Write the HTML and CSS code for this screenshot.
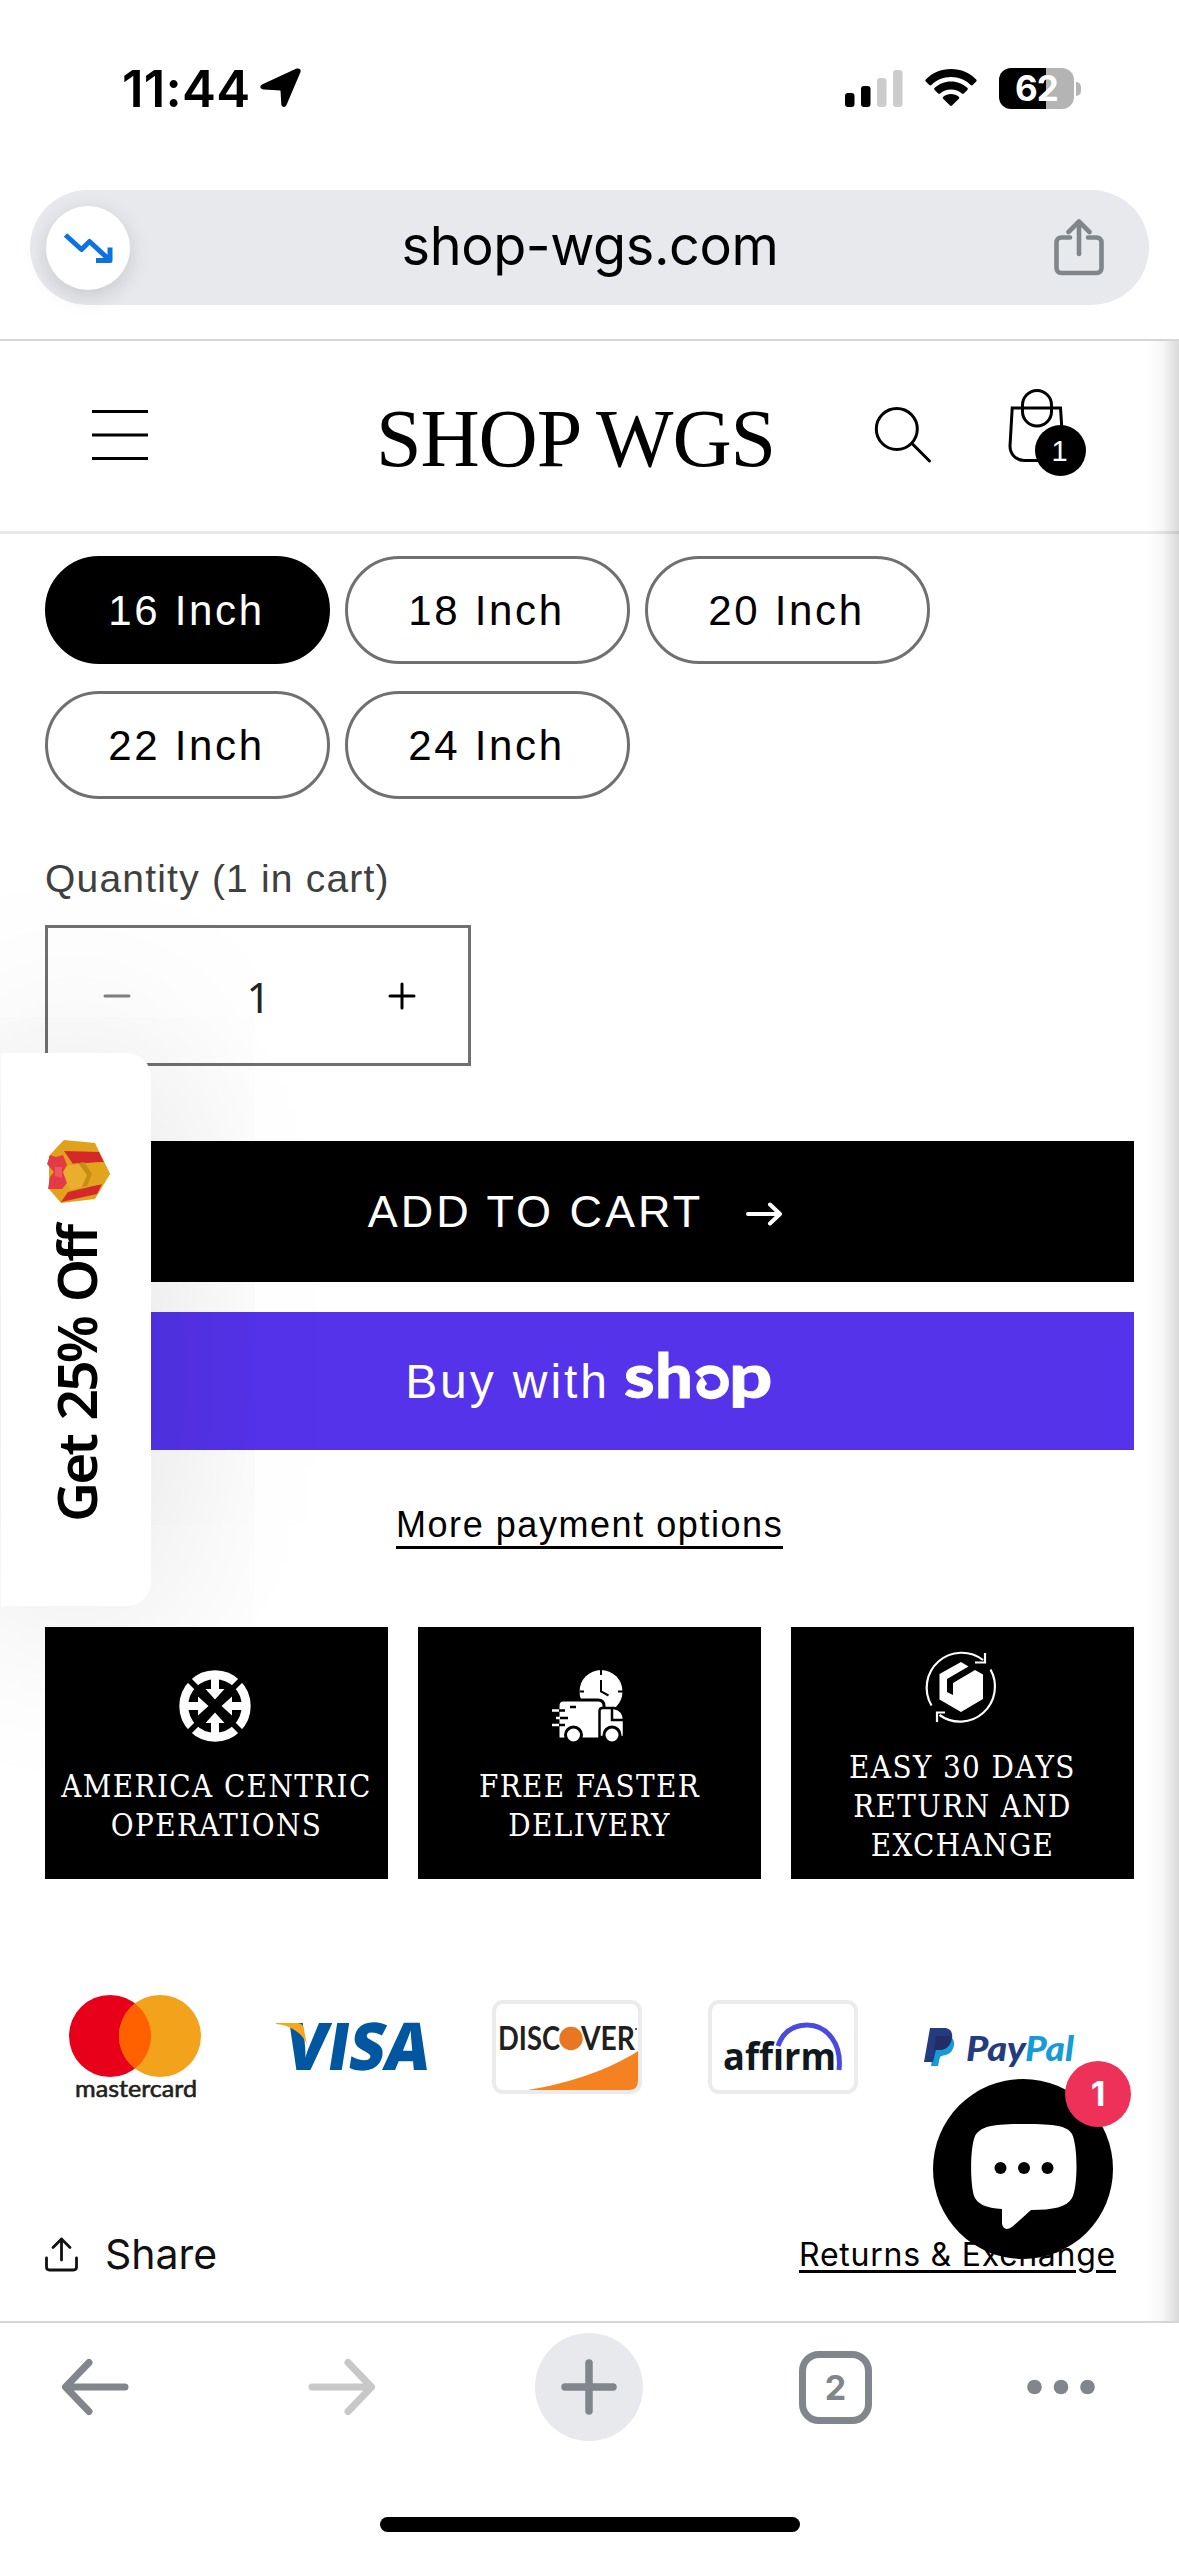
FILE: index.html
```html
<!DOCTYPE html>
<html lang="en">
<head>
<meta charset="utf-8">
<title>Shop WGS</title>
<link rel="stylesheet" href="styles.css">
</head>
<body>
<header class="browser-top">
  <div class="status">
    <div class="status-left">
      <span class="time">11:44</span>
      <svg width="41" height="40" viewBox="0 0 41 40"><path d="M40.500 4 26.500 37c-1.200 2.800-5 2.600-5.200-.8L20.500 22.500 4 21.500c-4-.2-5-3.600-1.500-5.200L36 .8c3-1.300 5.500.6 4.500 3.200Z"/></svg>
    </div>
    <div class="status-right">
      <svg width="58" height="37" viewBox="0 0 58 37"><rect y="23" width="9.500" height="14" rx="3"/><rect x="16" y="16" width="9.500" height="21" rx="3"/><g fill="#ccc"><rect x="32" y="8" width="9.500" height="29" rx="3"/><rect x="48" width="9.500" height="37" rx="3"/></g></svg>
      <svg width="52" height="38" viewBox="0 0 52 38"><path d="M26 0C16 0 7 4 .8 10.500c-.6.600-.6 1.400 0 2l3.500 3.500c.6.600 1.400.6 2 0C11.500 10.900 18.400 8 26 8s14.500 2.900 19.700 8c.6.600 1.400.6 2 0l3.500-3.500c.6-.6.6-1.400 0-2C45 4 36 0 26 0Z"/><path d="M26 12.500c-6.300 0-12 2.400-16.300 6.300-.7.600-.7 1.500-.1 2.100l3.600 3.600c.5.500 1.300.6 1.900 0 2.900-2.600 6.700-4 10.900-4s8 1.400 10.900 4c.6.600 1.400.5 1.900 0l3.600-3.600c.6-.6.600-1.500-.1-2.100C38 14.900 32.300 12.500 26 12.500Z"/><path d="M26 25c-2.900 0-5.600 1-7.700 2.700-.7.600-.7 1.400-.1 2l6.800 6.800c.6.600 1.400.6 2 0l6.800-6.800c.6-.6.6-1.400-.1-2C31.600 26 28.900 25 26 25Z"/></svg>
      <div class="battery"><span class="battery-level">62</span><i class="battery-tip"></i></div>
    </div>
  </div>
  <div class="address">
    <span class="price-chip"><svg width="50" height="32" viewBox="0 0 50 32" fill="none" stroke="#0b72e0" stroke-width="5" stroke-linejoin="round"><path d="M2.500 3 18.500 17.500 26.500 9.500 46 27.500M47 15.500v13H33"/></svg></span>
    <span class="url">shop-wgs.com</span>
    <svg class="share-page" width="50" height="57" viewBox="0 0 50 57" fill="none" stroke="#80868b" stroke-width="4.600" stroke-linecap="round" stroke-linejoin="round"><path d="M16 18.500H7.500c-3 0-5 2-5 5V49c0 3 2 5 5 5h35c3 0 5-2 5-5V23.500c0-3-2-5-5-5H34M25 35V3M14.500 13 25 2.500 35.500 13"/></svg>
  </div>
</header>

<div class="site">
  <header class="shop-header">
    <svg class="menu" width="58" height="52" viewBox="0 0 58 52" stroke="#000" stroke-width="3"><path d="M1 2.500H57M1 26H57M1 49.500H57"/></svg>
    <h1 class="logo">SHOP WGS</h1>
    <svg class="search" width="58" height="58" viewBox="0 0 58 58" fill="none" stroke="#000" stroke-width="3" stroke-linecap="round"><circle cx="22.800" cy="23" r="20.500"/><path d="M38 37.500 55.500 55"/></svg>
    <div class="bag">
      <svg width="58" height="76" viewBox="0 0 58 76" fill="none" stroke="#000" stroke-width="3"><path d="M4.200 20H52.500l2.500 38c0 9-6 14.500-13 14.500H16C8 72.500 2 66 2 58Z"/><rect x="14.500" y="2.500" width="29" height="35.500" rx="14.500"/></svg>
      <span class="bag-count">1</span>
    </div>
  </header>

  <main class="product">
    <div class="sizes">
      <span class="size selected">16 Inch</span><span class="size">18 Inch</span><span class="size">20 Inch</span><span class="size">22 Inch</span><span class="size">24 Inch</span>
    </div>
    <div class="qty-label">Quantity (1 in cart)</div>
    <div class="qty">
      <svg width="28" height="28" viewBox="0 0 28 28" stroke="#7f7f7f" stroke-width="3" stroke-linecap="round"><path d="M2 14H26"/></svg>
      <span class="qty-value">1</span>
      <svg width="28" height="28" viewBox="0 0 28 28" stroke="#000" stroke-width="3" stroke-linecap="round"><path d="M2 14H26M14 2V26"/></svg>
    </div>
    <button class="add">ADD TO CART<svg width="38" height="26" viewBox="0 0 38 26" fill="none" stroke="#fff" stroke-width="4" stroke-linecap="round" stroke-linejoin="round"><path d="M3 13H35M25 3.500 35 13 25 22.500"/></svg></button>
    <button class="buy">Buy with
      <svg class="shop-mark" width="150" height="62" viewBox="0 0 150 62">
        <g font-family="Lato" font-weight="900" font-size="61" fill="#fff" stroke="#fff" stroke-width=".8"><text x="0" y="48" textLength="34" lengthAdjust="spacingAndGlyphs">s</text><text x="31" y="48" textLength="41" lengthAdjust="spacingAndGlyphs">h</text><text x="105" y="48" textLength="47" lengthAdjust="spacingAndGlyphs">p</text></g>
        <path d="M74 25C80 18.500 89 18 95 22 102 27 102.500 36.500 97 41.500 91 46.500 80.500 46 77.500 40.500 75.500 37 77 33 81 30.500" fill="none" stroke="#fff" stroke-width="8.500"/>
      </svg>
    </button>
    <a class="more">More payment options</a>

    <section class="features">
      <div class="feature">
        <svg width="72" height="72" viewBox="-36 -36 72 72"><circle r="31.200" fill="none" stroke="#fff" stroke-width="9"/><path d="M-26-26-12-12M26 26 12 12M26-26 12-12M-26 26-12 12" stroke="#000" stroke-width="5.500"/><g fill="#fff"><path id="arw" d="M-4-30H4V-17H9.500L0-6.500-9.500-17H-4Z"/><use href="#arw" transform="rotate(90)"/><use href="#arw" transform="rotate(180)"/><use href="#arw" transform="rotate(270)"/></g></svg>
        <p>AMERICA CENTRIC OPERATIONS</p>
      </div>
      <div class="feature">
        <svg width="72" height="72" viewBox="0 0 72 72"><circle cx="49" cy="21.500" r="21.500" fill="#fff"/><path d="M49 0V5M27.500 21.500H32M66 21.500H71M49 10V21.500L56.500 25.500" fill="none" stroke="#000" stroke-width="2"/><path d="M6 36c0-4 2-6 5-6H46c4 0 6 2 6 6V69H6Z" fill="#fff" stroke="#000" stroke-width="3"/><path d="M47.500 67V41q0-3 3-3H62q10 2 10 12V67Z" fill="#fff" stroke="#000" stroke-width="2.500"/><path d="M60 38V50H72" fill="none" stroke="#000" stroke-width="2.500"/><path d="M0 40.500H7M4 48H10M0 55H7" stroke="#fff" stroke-width="2.500"/><path d="M7 40.500H13M8 48H16M7 55H13M18 37H24" stroke="#000" stroke-width="2.500"/><g fill="#fff" stroke="#000" stroke-width="3"><circle cx="21.500" cy="65" r="8"/><circle cx="60" cy="65" r="8"/></g></svg>
        <p>FREE FASTER DELIVERY</p>
      </div>
      <div class="feature">
        <svg width="72" height="72" viewBox="0 0 72 72" fill="none" stroke="#fff" stroke-width="2.200"><path d="M6.500 54.500A35 35 0 0 1 58 9M65.500 18.500A35 35 0 0 1 14.500 64M60 2V11.500H50M12 71V61.500H20"/><path d="M36 11 43.500 15.500 22 28V41L28 44V32L50 19 58 23.500V48L36 61 14.500 48.500V23Z" fill="#fff" stroke="none"/></svg>
        <p>EASY 30 DAYS RETURN AND EXCHANGE</p>
      </div>
    </section>

    <section class="payments">
      <svg width="150" height="110" viewBox="0 0 150 110"><circle cx="50" cy="46" r="41" fill="#e8001b"/><circle cx="100" cy="46" r="41" fill="#f3a21b"/><path d="M75 13.500A41 41 0 0 1 75 78.500 41 41 0 0 1 75 13.500Z" fill="#ff6000"/><text x="15" y="107" font-family="Lato" font-weight="400" stroke="#231f20" stroke-width=".6" font-size="23" fill="#231f20" textLength="122" lengthAdjust="spacingAndGlyphs">mastercard</text></svg>
      <svg width="150" height="110" viewBox="0 0 150 110"><text transform="translate(6 80) skewX(-9)" font-family="Open Sans" font-weight="800" font-size="66" fill="#00579f" textLength="145" lengthAdjust="spacingAndGlyphs">VISA</text><path d="M0 33H20C26 33 27 35 28 40L31 55C27 44 17 36 0 34Z" fill="#faa61a"/></svg>
      <svg width="150" height="110" viewBox="0 0 150 110"><rect x="2" y="12" width="146" height="90" rx="9" fill="#fff" stroke="#ebebeb" stroke-width="4"/><path d="M36 100C80 93 120 78 146 61V91Q146 100 137 100Z" fill="#f58220"/><g font-family="Lato" font-weight="700" font-size="32" fill="#231f20"><text x="6" y="60" textLength="62" lengthAdjust="spacingAndGlyphs">DISC</text><text x="89" y="60" textLength="54" lengthAdjust="spacingAndGlyphs">VER</text></g><circle cx="79" cy="48.500" r="11.700" fill="#e87722"/><circle cx="144" cy="39" r="1" fill="#231f20"/></svg>
      <svg width="150" height="110" viewBox="0 0 150 110"><rect x="2" y="12" width="146" height="90" rx="9" fill="#fff" stroke="#ebebeb" stroke-width="4"/><path d="M70 56C76 39 88 35 99 35 120 35 134 55 131 80" fill="none" stroke="#4a4ae0" stroke-width="5"/><text x="15" y="80" font-family="Open Sans" font-weight="700" font-size="38" fill="#101820" textLength="113" lengthAdjust="spacingAndGlyphs">affırm</text></svg>
      <svg width="150" height="110" viewBox="0 0 150 110"><path d="M11 46H25C32 49 31 57 27 62 23 66 18 65 16 67L14 76H7Z" fill="#179bd7"/><path d="M6 38H20C27 38 29 43 28 49 26 58 20 60 12 60L9 72H0Z" fill="#253b80"/><path d="M12 46H26C28 50 25 60 16 60H10Z" fill="#222d65"/><g font-family="Lato" font-weight="900" font-style="italic" font-size="35"><text x="42" y="71" fill="#253b80" textLength="60" lengthAdjust="spacingAndGlyphs">Pay</text><text x="101" y="71" fill="#179bd7" textLength="49" lengthAdjust="spacingAndGlyphs">Pal</text></g></svg>
    </section>

    <div class="links">
      <a class="share"><svg width="33" height="36" viewBox="0 0 33 36" fill="none" stroke="#111" stroke-width="2.800" stroke-linecap="round" stroke-linejoin="round"><path d="M1.500 22V31c0 2 1 3 3 3h24c2 0 3-1 3-3V22M16.500 24V3M8 11.500 16.500 3 25 11.500"/></svg>Share</a>
      <a class="returns">Returns &amp; Exchange</a>
    </div>
  </main>

  <aside class="offer">
    <span class="offer-text">Get 25% Off</span>
    <svg class="gift" width="64" height="64" viewBox="0 0 64 64"><path d="M12 6 18 0 49 3 64 34 49 59 15 63 3 49V16Z" fill="#dfa21a"/><path d="M18 11 53 12 58 22 27 24ZM22 52 56 44 51 54 15 62Z" fill="#d5282b"/><path d="M24 24 58 22 64 34 57 44 23 50Z" fill="#e0a51c"/><path d="M22 25 33 23 41 35 36 47 24 50 14 36Z" fill="#e9ae2e"/><path d="M22 25 38 22 46 34 41 46 36 47 41 35 33 24Z" fill="#c58d14"/><path d="M4 15 10 17 17 15 21 25 17 32 21 43 16 49H2L4 37 8 32 1 24Z" fill="#e23b45"/><path d="M9 27H16V38L9 36Z" fill="#ef5660"/></svg>
  </aside>

  <div class="chat">
    <svg width="106" height="106" viewBox="0 0 106 106"><path d="M53 0C85 0 96 2 101 10 107 22 107 63 101 74 96 83 82 86 60 86L41 103Q33 108 31 100V85C15 84 6 80 3 72-1 58-1 24 4 12 10 2 22 0 53 0Z" fill="#fff"/><circle cx="29.500" cy="44" r="6"/><circle cx="53" cy="44" r="6"/><circle cx="76.500" cy="44" r="6"/></svg>
    <span class="chat-count">1</span>
  </div>
  <div class="edge-shade"></div>
</div>

<footer class="browser-bottom">
  <nav class="toolbar">
    <svg width="68" height="58" viewBox="0 0 68 58" fill="none" stroke="#80868b" stroke-width="7" stroke-linecap="round" stroke-linejoin="round"><path d="M64 29H5M28 4.500 4.500 29 28 53.500"/></svg>
    <svg width="68" height="58" viewBox="0 0 68 58" fill="none" stroke="#c8c8c8" stroke-width="7" stroke-linecap="round" stroke-linejoin="round"><path d="M4 29H63M40 4.500 63.500 29 40 53.500"/></svg>
    <span class="new-tab"><svg width="56" height="56" viewBox="0 0 56 56" stroke="#80868b" stroke-width="7.500" stroke-linecap="round"><path d="M4 28H52M28 4V52"/></svg></span>
    <span class="tabs">2</span>
    <svg width="68" height="16" viewBox="0 0 68 16" fill="#80868b"><circle cx="7.500" cy="8" r="7.300"/><circle cx="34" cy="8" r="7.300"/><circle cx="60.500" cy="8" r="7.300"/></svg>
  </nav>
  <div class="home-bar"></div>
</footer>
</body>
</html>
```
FILE: styles.css
```css
* { box-sizing: border-box; }
body { margin: 0; width: 1179px; height: 2556px; overflow: hidden; background: #fff; color: #000; font-family: "Liberation Sans", sans-serif; display: flex; flex-direction: column; }
svg { display: block; flex: none; overflow: visible; }
p, h1 { margin: 0; }
button { border: 0; padding: 0; font-family: inherit; color: #fff; display: flex; align-items: center; justify-content: center; }

.browser-top { height: 341px; border-bottom: 2px solid #d6d6d8; font-family: Inter, sans-serif; }
.status { height: 190px; padding: 0 98px 14px 122px; display: flex; justify-content: space-between; align-items: center; }
.status-left { display: flex; align-items: center; gap: 10px; }
.time { font-size: 51px; font-weight: 600; letter-spacing: .2px; }
.status-right { display: flex; align-items: center; gap: 22px; }
.battery { position: relative; width: 75px; height: 41px; border-radius: 12px; background: linear-gradient(90deg, #000 63%, #b4b4b4 63%); display: flex; align-items: center; justify-content: center; margin-right: 7px; }
.battery-level { color: #fff; font-size: 35px; font-weight: 700; letter-spacing: -1px; }
.battery-tip { position: absolute; left: 77px; top: 14px; width: 5px; height: 14px; border-radius: 0 5px 5px 0; background: #b4b4b4; }
.address { height: 115px; margin: 0 30px; padding: 0 45px 0 16px; border-radius: 58px; background: #e8e9ec; display: flex; align-items: center; justify-content: space-between; }
.price-chip { width: 84px; height: 84px; border-radius: 50%; background: #fff; display: flex; align-items: center; justify-content: center; box-shadow: 0 6px 22px rgba(0, 0, 0, .14); }
.url { font-size: 54px; letter-spacing: -0.4px; padding: 0 4px 5px 0; }

.site { position: relative; height: 1980px; overflow: hidden; }
.shop-header { height: 193px; border-bottom: 3px solid #e8e8e8; display: grid; grid-template-columns: 378px 495px 135px 1fr; align-items: center; }
.menu { margin-left: 91px; margin-top: -3px; }
.logo { font: 400 82px/96px "Liberation Serif", serif; letter-spacing: -1.1px; margin-top: 6px; white-space: nowrap; margin-left: -2px; }
.search { margin: -3px 0 0 1px; }
.bag { position: relative; width: 58px; margin-top: -20px; }
.bag-count { position: absolute; left: 27px; top: 37px; width: 51px; height: 51px; border-radius: 50%; background: #000; color: #fff; font: 29px/53px "Liberation Sans", sans-serif; text-align: center; padding-right: 2px; }

.product { padding: 22px 45px 0; }
.sizes { display: flex; flex-wrap: wrap; gap: 27px 15px; }
.size { width: 285px; height: 108px; border: 3px solid #707070; border-radius: 54px; font-size: 42px; line-height: 104px; letter-spacing: 2.7px; text-align: center; padding-right: 2px; }
.selected { background: #000; border-color: #000; color: #fff; }
.qty-label { margin-top: 53px; font-size: 39px; line-height: 54px; letter-spacing: 1.2px; color: #404040; }
.qty { margin-top: 19px; width: 426px; height: 141px; border: 3px solid #707070; padding: 0 52px 0 55px; display: flex; align-items: center; justify-content: space-between; }
.qty-value { font: 42px/60px "Noto Sans", sans-serif; color: #222; padding: 2px 2px 0 0; }
.add { margin-top: 75px; width: 100%; height: 141px; background: #000; font-size: 45px; letter-spacing: 3px; gap: 42px; padding-right: 28px; }
.add svg { margin-top: 4px; }
.buy { margin-top: 30px; width: 100%; height: 138px; background: #5433eb; font-size: 48px; letter-spacing: 2.9px; gap: 14px; }
.more { display: block; width: 387px; height: 49px; margin: 50px auto 0; border-bottom: 3px solid #000; font-size: 36px; line-height: 50px; letter-spacing: 1.55px; white-space: nowrap; }

.features { margin-top: 78px; display: grid; grid-template-columns: repeat(3, 343px); gap: 30px; }
.feature { height: 252px; background: #000; color: #fff; display: flex; flex-direction: column; align-items: center; justify-content: center; gap: 25px; padding-top: 9px; }
.feature svg { margin-right: 3px; }
.feature p { font: 31px/39px "DejaVu Serif Condensed", "DejaVu Serif", serif; font-stretch: condensed; letter-spacing: 1.4px; text-align: center; }
.payments { margin: 111px 14px 0 15px; display: flex; justify-content: space-between; width: 1014px; }
.links { margin-top: 124px; height: 60px; padding-right: 18px; display: flex; align-items: center; justify-content: space-between; font-family: Inter, sans-serif; }
.share { display: flex; align-items: center; gap: 27px; font-size: 41px; color: #111; }
.returns { font-size: 32px; letter-spacing: .75px; text-decoration: underline; text-decoration-thickness: 3px; text-underline-offset: 4px; }

.offer { position: absolute; left: 1px; top: 712px; width: 150px; height: 553px; border-radius: 0 24px 24px 0; background: #fff; box-shadow: 0 0 200px rgba(0, 0, 0, .15); display: flex; flex-direction: column-reverse; align-items: center; justify-content: flex-start; gap: 15px; padding-bottom: 84px; }
.offer-text { writing-mode: vertical-rl; transform: rotate(180deg); font: 600 55px/76px "Noto Sans", "Open Sans", sans-serif; letter-spacing: -2.8px; word-spacing: 4px; white-space: nowrap; height: 303px; }
.gift { margin-left: 4px; }
.chat { position: absolute; left: 933px; top: 1738px; width: 180px; height: 180px; border-radius: 50%; background: #000; padding: 45px 0 0 38px; }
.chat-count { position: absolute; left: 132px; top: -18px; width: 66px; height: 66px; border-radius: 50%; background: #ee3158; color: #fff; font: 700 34px/66px Inter, sans-serif; text-align: center; }
.edge-shade { position: absolute; right: 0; top: 0; width: 32px; height: 100%; background: linear-gradient(90deg, rgba(0, 0, 0, 0), rgba(0, 0, 0, .035) 50%, rgba(0, 0, 0, .15)); }

.browser-bottom { height: 235px; border-top: 2px solid #d6d6d8; font-family: Inter, sans-serif; }
.toolbar { margin: 10px 0 0 -29px; height: 108px; display: grid; grid-template-columns: repeat(4, 247px) 204px; align-items: center; justify-items: center; }
.new-tab { width: 108px; height: 108px; border-radius: 50%; background: #e8e9ec; display: flex; align-items: center; justify-content: center; }
.tabs { width: 73px; height: 73px; border: 7px solid #80868b; border-radius: 20px; color: #80868b; font-size: 34px; line-height: 59px; font-weight: 700; text-align: center; }
.home-bar { width: 420px; height: 15px; border-radius: 8px; background: #000; margin: 76px auto 0; }
```
